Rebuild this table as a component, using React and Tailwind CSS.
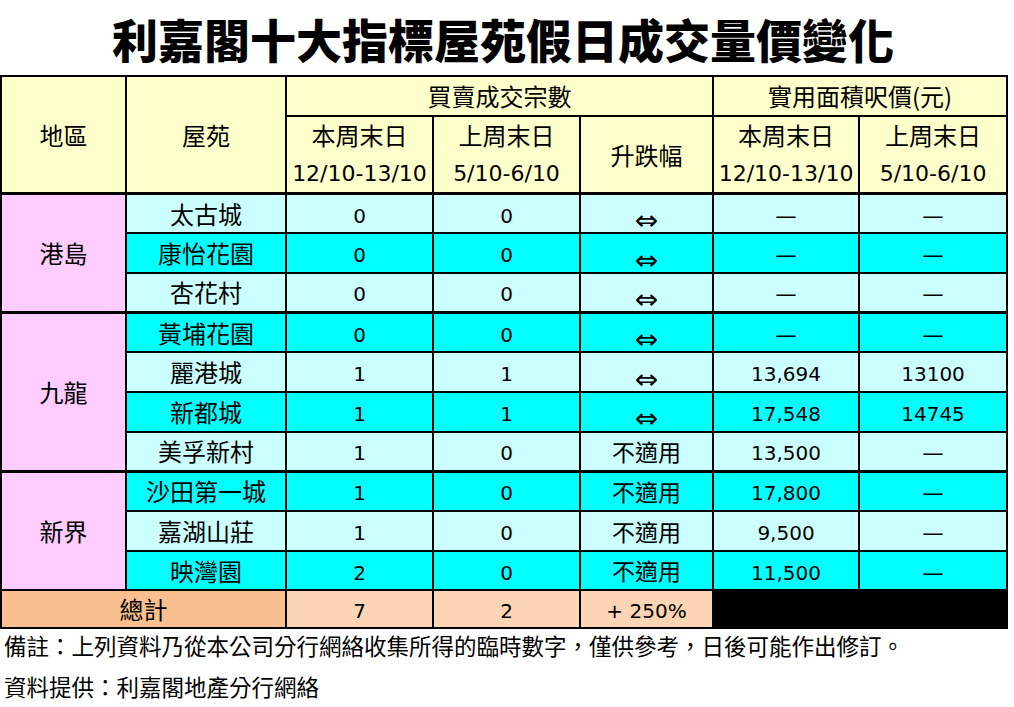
import React from 'react';

const groups = [
  {
    region: '港島',
    rows: [
      ['太古城', '0', '0', '⇔', '—', '—'],
      ['康怡花園', '0', '0', '⇔', '—', '—'],
      ['杏花村', '0', '0', '⇔', '—', '—'],
    ],
  },
  {
    region: '九龍',
    rows: [
      ['黃埔花園', '0', '0', '⇔', '—', '—'],
      ['麗港城', '1', '1', '⇔', '13,694', '13100'],
      ['新都城', '1', '1', '⇔', '17,548', '14745'],
      ['美孚新村', '1', '0', '不適用', '13,500', '—'],
    ],
  },
  {
    region: '新界',
    rows: [
      ['沙田第一城', '1', '0', '不適用', '17,800', '—'],
      ['嘉湖山莊', '1', '0', '不適用', '9,500', '—'],
      ['映灣園', '2', '0', '不適用', '11,500', '—'],
    ],
  },
];

const cjk = "font-['Noto_Sans_CJK_TC',sans-serif]";
const num = "font-['DejaVu_Sans','Noto_Sans_CJK_TC',sans-serif]";

// one price / count cell, picks font by content
const Val = ({ v }) => {
  if (v === '—') return <span className={`${cjk} text-[24px]`}>—</span>;
  if (v === '⇔') return <span className={`${num} text-[28px] leading-none relative top-[8px]`}>⇔</span>;
  if (v === '不適用') return <span className={`${cjk} text-[23px]`}>不適用</span>;
  return <span className={`${num} text-[20px] relative top-[2px]`}>{v}</span>;
};

const HeadDate = ({ title, date }) => (
  <div className="flex flex-col items-center gap-[3px] leading-[36px]">
    <span className={`${cjk} text-[24px]`}>{title}</span>
    <span className={`${num} text-[22px]`}>{date}</span>
  </div>
);

export default function App() {
  const th = 'border-2 border-black bg-[#FFFFCC] text-center align-middle p-0 font-normal';
  let idx = 0;

  return (
    <div className="w-[1014px] bg-white text-black">
      <h1 className={`${cjk} h-[75px] w-[1006px] flex items-center justify-center text-[46px] font-black leading-none`}>
        利嘉閣十大指標屋苑假日成交量價變化
      </h1>

      <table className="table-fixed border-collapse w-[1006px]">
        <colgroup>
          <col className="w-[125px]" />
          <col className="w-[160px]" />
          <col className="w-[147px]" />
          <col className="w-[147px]" />
          <col className="w-[133px]" />
          <col className="w-[146px]" />
          <col className="w-[148px]" />
        </colgroup>
        <thead>
          <tr className="h-[40px]">
            <th rowSpan={2} className={`${th} ${cjk} text-[24px]`}>地區</th>
            <th rowSpan={2} className={`${th} ${cjk} text-[24px]`}>屋苑</th>
            <th colSpan={3} className={`${th} ${cjk} text-[24px]`}>買賣成交宗數</th>
            <th colSpan={2} className={`${th} ${cjk} text-[24px]`}>實用面積呎價(元)</th>
          </tr>
          <tr className="h-[75.5px]">
            <th className={th}><HeadDate title="本周末日" date="12/10-13/10" /></th>
            <th className={th}><HeadDate title="上周末日" date="5/10-6/10" /></th>
            <th className={`${th} ${cjk} text-[24px]`}>升跌幅</th>
            <th className={th}><HeadDate title="本周末日" date="12/10-13/10" /></th>
            <th className={th}><HeadDate title="上周末日" date="5/10-6/10" /></th>
          </tr>
        </thead>
        <tbody>
          {groups.map((g) =>
            g.rows.map((r, i) => {
              const bg = idx++ % 2 === 0 ? 'bg-[#CCFFFF]' : 'bg-[#00FFFF]';
              const top = i === 0 ? 'border-t-[3px]' : '';
              const td = `border-2 border-black ${top} ${bg} text-center align-middle p-0`;
              return (
                <tr key={r[0]} className="h-[39.7px]">
                  {i === 0 && (
                    <td
                      rowSpan={g.rows.length}
                      className={`border-2 border-black border-t-[3px] bg-[#FFCCFF] text-center align-middle p-0 ${cjk} text-[24px]`}
                    >
                      {g.region}
                    </td>
                  )}
                  <td className={`${td} ${cjk} text-[24px]`}>{r[0]}</td>
                  {r.slice(1).map((v, j) => (
                    <td key={j} className={td}>
                      <Val v={v} />
                    </td>
                  ))}
                </tr>
              );
            })
          )}
          <tr className="h-[37px]">
            <td colSpan={2} className={`border-2 border-black bg-[#FABF8F] text-center p-0 ${cjk} text-[24px]`}>總計</td>
            <td className="border-2 border-black bg-[#FCD5B4] text-center p-0"><Val v="7" /></td>
            <td className="border-2 border-black bg-[#FCD5B4] text-center p-0"><Val v="2" /></td>
            <td className="border-2 border-black bg-[#FCD5B4] text-center p-0"><Val v="+ 250%" /></td>
            <td colSpan={2} className="border-2 border-black bg-black p-0"></td>
          </tr>
        </tbody>
      </table>

      <div className={`${cjk} text-[22.5px] leading-[41px] px-[4px] -mt-[4px]`}>
        <p>備註：上列資料乃從本公司分行網絡收集所得的臨時數字，僅供參考，日後可能作出修訂。</p>
        <p>資料提供：利嘉閣地產分行網絡</p>
      </div>
    </div>
  );
}
